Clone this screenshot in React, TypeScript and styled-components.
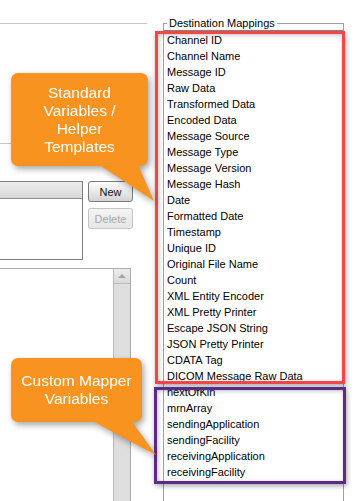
import React from "react";
import styled, { createGlobalStyle } from "styled-components";

const standardItems = [
  "Channel ID",
  "Channel Name",
  "Message ID",
  "Raw Data",
  "Transformed Data",
  "Encoded Data",
  "Message Source",
  "Message Type",
  "Message Version",
  "Message Hash",
  "Date",
  "Formatted Date",
  "Timestamp",
  "Unique ID",
  "Original File Name",
  "Count",
  "XML Entity Encoder",
  "XML Pretty Printer",
  "Escape JSON String",
  "JSON Pretty Printer",
  "CDATA Tag",
  "DICOM Message Raw Data",
];

const customItems = [
  "nextOfKin",
  "mrnArray",
  "sendingApplication",
  "sendingFacility",
  "receivingApplication",
  "receivingFacility",
];

const GlobalStyle = createGlobalStyle`
  html, body {
    margin: 0;
    padding: 0;
    background: #ffffff;
  }
  body {
    font-family: "Liberation Sans", Arial, sans-serif;
    font-size: 11px;
    color: #000;
  }
`;

const Screen = styled.div`
  position: relative;
  width: 354px;
  height: 501px;
  overflow: hidden;
  display: flex;
  background: #fff;
`;

const LeftColumn = styled.div`
  width: 147px;
  display: flex;
  flex-direction: column;
`;

const TopPanel = styled.div`
  margin-top: 23px;
  height: 119px;
  border-top: 1px solid #c8c8c8;
  border-bottom: 1px solid #c8c8c8;
`;

const TableRow = styled.div`
  margin-top: 37px;
  display: flex;
  align-items: flex-start;
`;

const Table = styled.div`
  width: 82px;
  height: 77px;
  border: 1px solid #7c7c7c;
  border-left: none;
  background: #fff;
`;

const TableHeader = styled.div`
  height: 16px;
  border-bottom: 1px solid #8e8e8e;
  background: linear-gradient(#ececec, #d9d9d9);
`;

const ButtonStack = styled.div`
  margin-left: 5px;
  display: flex;
  flex-direction: column;
  gap: 6px;
`;

const Button = styled.button<{ $disabled?: boolean }>`
  width: 45px;
  height: 21px;
  padding: 0;
  border-radius: 3px;
  font-family: "Liberation Sans", Arial, sans-serif;
  font-size: 11px;
  color: ${(p) => (p.$disabled ? "#a8a8a8" : "#111")};
  border: 1px solid ${(p) => (p.$disabled ? "#c4c4c4" : "#7a7a7a")};
  background: ${(p) =>
    p.$disabled
      ? "linear-gradient(#f4f4f4, #e6e6e6)"
      : "linear-gradient(#ffffff, #d4d4d4)"};
`;

const LowerPanel = styled.div`
  margin-top: 8px;
  width: 130px;
  flex: 1;
  border-top: 1px solid #ababab;
  border-right: 1px solid #ababab;
  display: flex;
  justify-content: flex-end;
`;

const ScrollBar = styled.div`
  width: 16px;
  border-left: 1px solid #b8b8b8;
  background: #dedede;
  display: flex;
  flex-direction: column;
`;

const ScrollButton = styled.div`
  height: 14px;
  border-bottom: 1px solid #bcbcbc;
  background: linear-gradient(#ececec, #dadada);
  display: flex;
  align-items: center;
  justify-content: center;
`;

const ArrowUp = styled.span`
  width: 0;
  height: 0;
  border-left: 4px solid transparent;
  border-right: 4px solid transparent;
  border-bottom: 4px solid #a4a4a4;
`;

const Fieldset = styled.fieldset`
  margin: 17px 0 0 16px;
  width: 181px;
  box-sizing: border-box;
  padding: 1px 0 0 0;
  border: 1px solid #a0a0a0;
  border-bottom: none;
  min-width: 0;
`;

const Legend = styled.legend`
  margin-left: 3px;
  padding: 0 2px;
  font-size: 11px;
  line-height: 12px;
  color: #000;
`;

const List = styled.div`
  height: 480px;
  border-top: 1px solid #8a8a8a;
  padding-top: 1px;
  background: #fff;
`;

const ListItem = styled.div`
  height: 16px;
  line-height: 16px;
  padding-left: 3px;
  white-space: nowrap;
`;

const Highlight = styled.div<{ $color: string }>`
  position: absolute;
  box-sizing: border-box;
  border: 3px solid ${(p) => p.$color};
  box-shadow: 1px 2px 5px rgba(0, 0, 0, 0.35),
    inset 1px 1px 4px rgba(0, 0, 0, 0.25);
  pointer-events: none;
`;

const Callout = styled.div`
  position: absolute;
  filter: drop-shadow(2px 3px 3px rgba(0, 0, 0, 0.35));
`;

const CalloutBody = styled.div<{ $w: number; $h: number }>`
  position: relative;
  width: ${(p) => p.$w}px;
  height: ${(p) => p.$h}px;
  background: #f7931e;
  border-radius: 7px;
  display: flex;
  align-items: center;
  justify-content: center;
  text-align: center;
  color: #fff;
  font-family: "Liberation Sans", Arial, sans-serif;
  font-size: 15.5px;
  line-height: 18px;
`;

const Pointer = styled.div<{ $points: string; $x: number; $y: number; $w: number; $h: number }>`
  position: absolute;
  left: ${(p) => p.$x}px;
  top: ${(p) => p.$y}px;
  width: ${(p) => p.$w}px;
  height: ${(p) => p.$h}px;
  background: #f7931e;
  clip-path: polygon(${(p) => p.$points});
`;

const CalloutText = styled.span`
  position: relative;
`;

export default function App() {
  return (
    <>
      <GlobalStyle />
      <Screen>
        <LeftColumn>
          <TopPanel />
          <TableRow>
            <Table>
              <TableHeader />
            </Table>
            <ButtonStack>
              <Button>New</Button>
              <Button $disabled>Delete</Button>
            </ButtonStack>
          </TableRow>
          <LowerPanel>
            <ScrollBar>
              <ScrollButton>
                <ArrowUp />
              </ScrollButton>
            </ScrollBar>
          </LowerPanel>
        </LeftColumn>

        <Fieldset>
          <Legend>Destination Mappings</Legend>
          <List>
            {standardItems.concat(customItems).map((item) => (
              <ListItem key={item}>{item}</ListItem>
            ))}
          </List>
        </Fieldset>

        <Highlight $color="#f24747" style={{ left: 155, top: 31, width: 190, height: 353 }} />
        <Highlight $color="#5c2b88" style={{ left: 154, top: 387, width: 192, height: 97 }} />

        <Callout style={{ left: 11, top: 73 }}>
          <CalloutBody $w={137} $h={93}>
            <Pointer $x={78} $y={85} $w={66} $h={43} $points="0 0, 46px 0, 65px 43px" />
            <CalloutText>
              Standard
              <br />
              Variables /
              <br />
              Helper
              <br />
              Templates
            </CalloutText>
          </CalloutBody>
        </Callout>

        <Callout style={{ left: 11, top: 358 }}>
          <CalloutBody $w={131} $h={64}>
            <Pointer $x={72} $y={58} $w={74} $h={39} $points="0 0, 45px 0, 73px 39px" />
            <CalloutText>
              Custom Mapper
              <br />
              Variables
            </CalloutText>
          </CalloutBody>
        </Callout>
      </Screen>
    </>
  );
}
